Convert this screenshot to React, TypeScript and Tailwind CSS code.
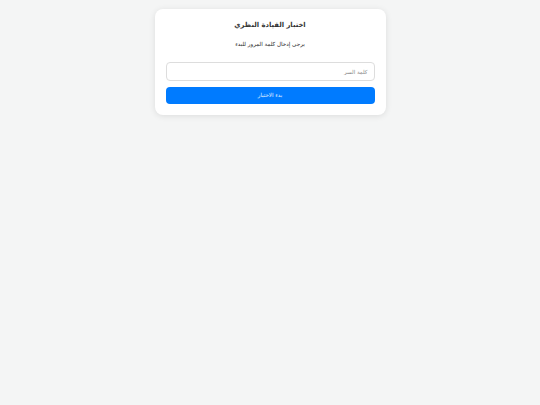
export default function App() {
  return (
    <div
      dir="rtl"
      className="min-h-screen w-full bg-[#f4f5f5] pt-[9px]"
      style={{ fontFamily: '"DejaVu Sans", sans-serif' }}
    >
      <div className="mx-auto w-[231px] rounded-[8px] bg-white px-[11px] pt-[11px] pb-[11px] shadow-[0_1px_6px_rgba(0,0,0,0.1)]">
        <h1 className="text-center text-[6.8px] font-bold leading-[10px] text-[#333]">
          اختبار القيادة النظري
        </h1>
        <p className="mt-[9px] text-center text-[5.6px] leading-[10px] text-[#222]">
          يرجى إدخال كلمة المرور للبدء
        </p>
        <input
          type="password"
          placeholder="كلمة السر"
          className="mt-[13px] block h-[19px] w-full rounded-[4px] border border-[#ddd] bg-white px-[6px] text-[5.5px] text-[#333] outline-none placeholder:text-[#888]"
        />
        <button
          type="button"
          className="mt-[6px] block h-[17px] w-full rounded-[4px] bg-[#007bff] text-[5.5px] text-white/90"
        >
          بدء الاختبار
        </button>
      </div>
    </div>
  );
}
